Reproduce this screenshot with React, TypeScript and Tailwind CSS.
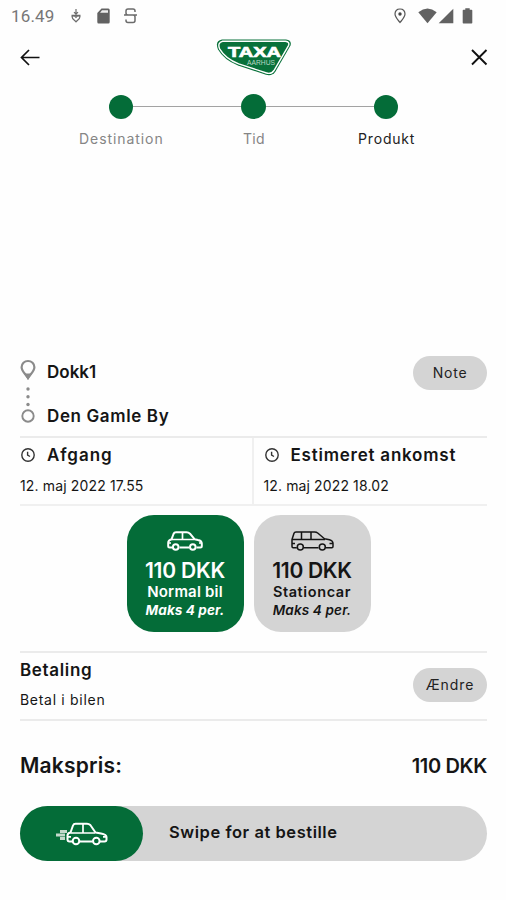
import React from "react";

type IconProps = { className?: string };

function SmallCar({ className }: IconProps) {
  return (
    <svg className={className} viewBox="0 0 36 20" fill="none" stroke="currentColor" strokeWidth="2" strokeLinejoin="round">
      <path d="M5 16.5H2.7C1.7 16.5 1.2 16 1.2 15V12C1.2 9.8 2.5 8.8 4.5 8.3L6.5 3C7 1.8 7.7 1.3 9 1.3H19.5C21 1.3 22 1.7 23 2.7L27.5 8.2L31 9C33.7 9.5 34.8 10.6 34.8 12.6V15C34.8 16 34.3 16.5 33.3 16.5H29.5M12.5 16.5H22" />
      <path d="M4.5 8.5H27M15.5 1.5V8.5M1.8 12H4M32 12H34.5" strokeWidth="1.7" />
      <circle cx="8.7" cy="16" r="2.8" />
      <circle cx="25.8" cy="16" r="2.8" />
    </svg>
  );
}

function WagonCar({ className }: IconProps) {
  return (
    <svg className={className} viewBox="0 0 43 20" fill="none" stroke="currentColor" strokeWidth="1.5" strokeLinejoin="round">
      <path d="M5.8 16.7H2.2Q1 16.7 1 15.5V8.5L3 2.2Q3.4 1 5 1H23.5Q25.5 1 27 2.3L33.5 7.8L38.5 8.8Q42 9.7 42 12.5V15.5Q42 16.7 40.8 16.7H35M13 16.7H27.5" />
      <path d="M1 8.5H34M10.5 1V8.5M20 1V8.5M1 12.5H4M38.5 12.5H42" />
      <circle cx="9.3" cy="16" r="3" />
      <circle cx="31.3" cy="16" r="3" />
    </svg>
  );
}

function Clock() {
  return (
    <svg className="h-4 w-4 shrink-0" viewBox="0 0 16 16" fill="none" stroke="#333" strokeWidth="1.4">
      <circle cx="8" cy="8" r="6.2" />
      <path d="M7.6 4.8V8.2L10 9.5" />
    </svg>
  );
}

function Logo() {
  return (
    <svg className="mr-[2px] mt-[2px] h-[40px] w-[76px]" viewBox="0 0 76 40">
      <path d="M6 1.5H70Q76 2 74.5 7.5L59.5 33.5Q56 38.5 50 36.8L22 27.5Q8 22 2 11.5Q-1.5 3 6 1.5Z" fill="#08713a" />
      <path d="M6.6 3.2H69.5Q74 3.8 72.5 7.6L58 32.5Q55.2 36.5 50.5 35L22.7 25.8Q9.5 20.8 3.6 10.8Q1.2 4.6 6.6 3.2Z" fill="none" stroke="#fff" strokeWidth="1.4" />
      <text x="12" y="18.8" textLength="53" lengthAdjust="spacingAndGlyphs" fill="#fff" stroke="#fff" strokeWidth="0.7" fontFamily="Liberation Sans, sans-serif" fontWeight="700" fontSize="15">TAXA</text>
      <text x="31" y="26.8" textLength="28" lengthAdjust="spacingAndGlyphs" fill="#b9d8c5" fontFamily="Liberation Sans, sans-serif" fontSize="7">AARHUS</text>
    </svg>
  );
}

function StatusBar() {
  return (
    <div className="flex h-8 items-center pl-[11px] pr-[33px] text-[#6b6b6b]">
      <span className="font-[Roboto,sans-serif] text-[17px] leading-8 tracking-[0.15px] text-[#777]">16.49</span>
      <svg className="ml-[16px] h-4 w-3 shrink-0" viewBox="0 0 12 16" fill="none" stroke="currentColor" strokeWidth="1.2">
        <path d="M6 1V6M4 4.2L6 6.2L8 4.2M1.5 7.3H10.5M2 8.5C2 11 4.5 12.2 6 13.8C7.5 12.2 10 11 10 8.5C8.5 7.5 7 8 6 9.3C5 8 3.5 7.5 2 8.5Z" />
      </svg>
      <svg className="ml-[15px] h-4 w-[13px] shrink-0" viewBox="0 0 13 16">
        <path d="M4.5.5H11.3Q12.7.5 12.7 2V14Q12.7 15.5 11.3 15.5H1.5Q.3 15.5 .3 14V5Z" fill="#626262" />
        <path d="M5 2.3H11V4.8H3Z" fill="#eee" />
      </svg>
      <svg className="ml-[14px] h-4 w-[13px] shrink-0" viewBox="0 0 13 16" fill="none" stroke="currentColor" strokeWidth="1.5">
        <path d="M11 4V3Q11 1 9 1H4Q2 1 2 3V5Q2 7 4 7H9Q11 7 11 9V12.5Q11 14.5 9 14.5H4Q2 14.5 2 12.5V11.5M0 7H13" />
      </svg>
      <div className="flex-1" />
      <svg className="h-4 w-3 shrink-0" viewBox="0 0 12 16">
        <path d="M6 1C3 1 1 3.1 1 6C1 9 4 12 6 14.5C8 12 11 9 11 6C11 3.1 9 1 6 1Z" fill="none" stroke="#555" strokeWidth="1.2" />
        <circle cx="6" cy="6" r="1.7" fill="#444" />
      </svg>
      <svg className="ml-3 h-4 w-[19px] shrink-0" viewBox="0 0 19 16" fill="#626262">
        <path d="M.3 4.2Q9.5-3.2 18.7 4.2L9.5 15.2Z" />
      </svg>
      <svg className="ml-[1px] h-4 w-4 shrink-0" viewBox="0 0 16 16" fill="#626262">
        <path d="M15.3.7V15.3H.7Z" />
      </svg>
      <svg className="ml-2 h-4 w-[11px] shrink-0" viewBox="0 0 11 16" fill="#626262">
        <path d="M3.3.2H7.7V1.8H9.5Q10.3 1.8 10.3 2.6V14.7Q10.3 15.5 9.5 15.5H1.5Q.7 15.5 .7 14.7V2.6Q.7 1.8 1.5 1.8H3.3Z" />
      </svg>
    </div>
  );
}

function Header() {
  return (
    <header className="flex h-[50px] items-center justify-between pl-5 pr-[18px]">
      <svg className="h-5 w-5" viewBox="0 0 20 20" fill="none" stroke="#111" strokeWidth="1.7">
        <path d="M19.5 10.5H1.5M9 3L1.5 10.5L9 18" />
      </svg>
      <Logo />
      <svg className="h-[18px] w-[18px]" viewBox="0 0 18 18" fill="none" stroke="#111" strokeWidth="1.9">
        <path d="M2 2L16.5 16.5M16.5 2L2 16.5" />
      </svg>
    </header>
  );
}

function Stepper() {
  return (
    <div className="h-[269px] pt-[12px]">
      <div className="ml-[109px] mr-[108px] flex items-center">
        <span className="h-6 w-6 rounded-full bg-[#046c38]" />
        <span className="h-[1.5px] flex-1 bg-[#a3a3a3]" />
        <span className="h-[25px] w-[25px] rounded-full bg-[#046c38]" />
        <span className="h-[1.5px] flex-1 bg-[#a3a3a3]" />
        <span className="h-6 w-6 rounded-full bg-[#046c38]" />
      </div>
      <div className="ml-[55px] mt-[8px] grid w-[398px] grid-cols-3 text-center text-[14px] leading-6 text-[#858585]">
        <span className="tracking-[0.92px]">Destination</span>
        <span className="tracking-[0.4px]">Tid</span>
        <span className="tracking-[0.8px] text-[#222]">Produkt</span>
      </div>
    </div>
  );
}

function Route() {
  return (
    <section className="flex h-[87px] justify-between border-b-2 border-[#ebebeb]">
      <div className="flex">
        <svg className="mt-[7px] h-[68px] w-4" viewBox="0 0 16 68" fill="none" stroke="#8b8b8b">
          <path d="M8 3C4.4 3 1.6 5.7 1.6 9.2C1.6 12.8 5 15.5 8 20C11 15.5 14.4 12.8 14.4 9.2C14.4 5.7 11.6 3 8 3Z" strokeWidth="2.2" />
          <path d="M4 15.5H12L8 22Z" fill="#8b8b8b" stroke="none" />
          <g fill="#8b8b8b" stroke="none">
            <circle cx="8" cy="31" r="1.7" />
            <circle cx="8" cy="38.7" r="1.7" />
            <circle cx="8" cy="46.5" r="1.7" />
          </g>
          <circle cx="8" cy="58" r="5.7" strokeWidth="1.9" />
        </svg>
        <div className="ml-[11px] mt-[9px] text-[17px] font-semibold leading-6">
          <div>Dokk1</div>
          <div className="mt-5 tracking-[0.62px]">Den Gamle By</div>
        </div>
      </div>
      <button className="mt-[5px] h-[34px] w-[74px] rounded-full bg-[#d4d4d4] pb-0.5 text-[14px] tracking-[0.8px] text-[#222]">Note</button>
    </section>
  );
}

function Times() {
  return (
    <section className="grid h-[68px] grid-cols-2 border-b-2 border-[#f0f0f0]">
      <div className="border-r-2 border-[#f0f0f0] pt-[5px]">
        <div className="flex items-center text-[17px] font-semibold leading-6"><Clock /><span className="ml-[11px] tracking-[0.95px]">Afgang</span></div>
        <div className="mt-[7px] text-[14px] leading-6 tracking-[0.15px]">12. maj 2022 17.55</div>
      </div>
      <div className="pl-[10px] pt-[5px]">
        <div className="flex items-center text-[17px] font-semibold leading-6"><Clock /><span className="ml-[11px] tracking-[0.77px]">Estimeret ankomst</span></div>
        <div className="mt-[7px] text-[14px] leading-6 tracking-[0.12px]">12. maj 2022 18.02</div>
      </div>
    </section>
  );
}

function Products() {
  return (
    <section className="flex h-[147px] justify-center gap-[10px] border-b-2 border-[#ebebeb] pr-[10px] pt-[9px]">
      <div className="flex h-[117px] w-[117px] flex-col items-center rounded-[27px] bg-[#046c38] pt-4 text-white">
        <SmallCar className="h-[20px] w-[36px]" />
        <div className="mt-[8px] text-[21px] font-semibold leading-6 tracking-[-0.2px]">110 DKK</div>
        <div className="text-[15px] font-semibold leading-[18px] tracking-[0.2px]">Normal bil</div>
        <div className="text-[13.5px] font-bold italic leading-[18px] tracking-[0.1px]">Maks 4 per.</div>
      </div>
      <div className="flex h-[117px] w-[117px] flex-col items-center rounded-[27px] bg-[#d4d4d4] pt-4 text-[#151515]">
        <WagonCar className="h-[20px] w-[43px]" />
        <div className="mt-[8px] text-[21px] font-semibold leading-6 tracking-[-0.3px]">110 DKK</div>
        <div className="text-[14.5px] font-semibold leading-[18px] tracking-[0.6px]">Stationcar</div>
        <div className="text-[13.5px] font-semibold italic leading-[18px] tracking-[0.15px]">Maks 4 per.</div>
      </div>
    </section>
  );
}

function Payment() {
  return (
    <section className="flex h-[68px] items-start justify-between border-b-2 border-[#ebebeb]">
      <div className="pt-[5px]">
        <div className="text-[17px] font-semibold leading-6 tracking-[0.65px]">Betaling</div>
        <div className="mt-[6px] text-[14px] leading-6 tracking-[0.7px]">Betal i bilen</div>
      </div>
      <button className="mt-[15px] h-[34px] w-[74px] rounded-full bg-[#d4d4d4] pb-0.5 text-[14px] tracking-[0.9px] text-[#222]">Ændre</button>
    </section>
  );
}

export default function App() {
  return (
    <main className="h-[900px] w-[506px] overflow-hidden bg-[#fefefe] font-[Inter,sans-serif] text-[#151515]">
      <StatusBar />
      <Header />
      <Stepper />
      <div className="ml-5 w-[467px]">
        <Route />
        <Times />
        <Products />
        <Payment />
        <div className="mt-[29px] flex h-8 items-center justify-between font-semibold">
          <span className="text-[21px] tracking-[0.2px]">Makspris:</span>
          <span className="text-[20px] tracking-[-0.35px]">110 DKK</span>
        </div>
        <div className="mt-6 flex h-[55px] items-center rounded-full bg-[#d4d4d4]">
          <div className="flex h-[55px] w-[123px] items-center justify-center rounded-full bg-[#046c38] text-white">
            <svg className="h-6 w-[53px]" viewBox="0 0 53 24" fill="none" stroke="currentColor" strokeWidth="2" strokeLinejoin="round">
              <path d="M17 19.5H14.5Q12.5 19.5 12.5 17.5V13.5Q12.5 11 15.5 10.5L18 3.5Q18.7 1.7 20.5 1.7H32Q34 1.7 35.3 3L40.5 10.5L46 11.5Q51.5 12.5 51.5 15V17.5Q51.5 19.5 49.5 19.5H45M25 19.5H37.5" />
              <path d="M15.5 11H40M28 2V11M13 14.8H16M48 14.8H51" strokeWidth="1.7" />
              <circle cx="21" cy="19" r="3.3" /><circle cx="41.3" cy="19" r="3.3" />
              <path d="M5 9.5H12M1 13H10M5 16.5H10" stroke="#c3d9cb" strokeWidth="3" />
            </svg>
          </div>
          <span className="ml-[26px] pb-[3px] text-[16.5px] font-semibold tracking-[0.55px]">Swipe for at bestille</span>
        </div>
      </div>
    </main>
  );
}
